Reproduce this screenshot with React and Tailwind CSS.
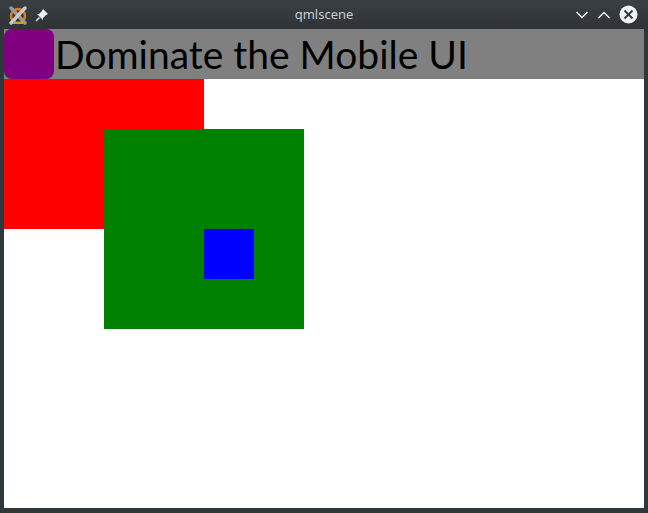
import React from "react";

const AppIcon = () => (
  <svg width="22" height="22" viewBox="0 0 22 22">
    <circle cx="11" cy="12" r="7" fill="none" stroke="#e07a1f" strokeWidth="2.5" />
    <path d="M4 4 L18 19" stroke="#9a9a9a" strokeWidth="3.5" strokeLinecap="round" />
    <path d="M18 4 L4 19" stroke="#c8c8c8" strokeWidth="3.5" strokeLinecap="round" />
    <path d="M6 19 L16 19" stroke="#c9a227" strokeWidth="2" />
  </svg>
);

const PinIcon = () => (
  <svg width="14" height="14" viewBox="0 0 14 14">
    <path d="M8 1 L13 6 L11 7 L8 10 L8 12 L2 6 L4 6 L7 3 Z" fill="#eff0f1" />
    <path d="M4.5 9.5 L1 13" stroke="#eff0f1" strokeWidth="1.5" />
  </svg>
);

const Chevron = ({ up }) => (
  <svg width="14" height="10" viewBox="0 0 14 10">
    <path
      d={up ? "M1.5 8 L7 2.5 L12.5 8" : "M1.5 2 L7 7.5 L12.5 2"}
      fill="none"
      stroke="#eff0f1"
      strokeWidth="1.4"
    />
  </svg>
);

const CloseIcon = () => (
  <svg width="19" height="19" viewBox="0 0 19 19">
    <circle cx="9.5" cy="9.5" r="9" fill="#eff0f1" />
    <path d="M5.5 5.5 L13.5 13.5 M13.5 5.5 L5.5 13.5" stroke="#31363b" strokeWidth="1.8" />
  </svg>
);

export default function App() {
  return (
    <div className="w-[648px] h-[513px] bg-[#31363b] flex flex-col" style={{ fontFamily: '"Noto Sans", sans-serif' }}>
      {/* Title bar */}
      <div className="h-[29px] flex items-center relative bg-gradient-to-b from-[#3a3f44] to-[#2f3337]">
        <div className="flex items-center pl-[7px] gap-[6px]">
          <AppIcon />
          <PinIcon />
        </div>
        <div className="absolute inset-0 flex items-center justify-center text-[13px] text-[#c8cbce]">
          qmlscene
        </div>
        <div className="ml-auto flex items-center gap-[8px] pr-[10px]">
          <Chevron />
          <Chevron up />
          <CloseIcon />
        </div>
      </div>

      {/* Scene */}
      <div className="mx-[4px] mb-[5px] flex-1 bg-white overflow-hidden">
        <div className="h-[50px] bg-[#808080] flex items-center">
          <div className="w-[50px] h-[50px] rounded-[8px] bg-[#800080]" />
          <span className="ml-[1px] text-[39px] leading-[50px] text-black" style={{ fontFamily: 'Lato, "Noto Sans", sans-serif' }}>
            Dominate the Mobile UI
          </span>
        </div>
        <div className="w-[200px] h-[150px] bg-[#ff0000]" />
        <div className="ml-[100px] -mt-[100px] w-[200px] h-[200px] bg-[#008000] pt-[100px] pl-[100px]">
          <div className="w-[50px] h-[50px] bg-[#0000ff]" />
        </div>
      </div>
    </div>
  );
}
